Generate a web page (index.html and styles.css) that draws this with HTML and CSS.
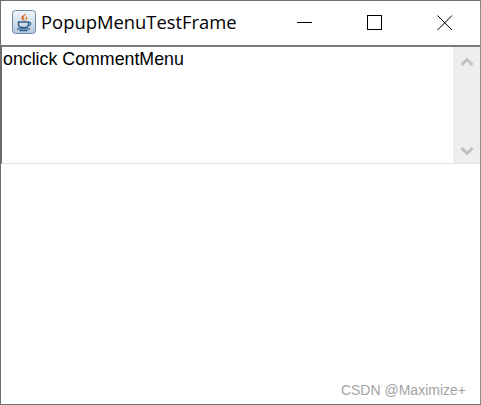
FILE: index.html
```html
<!DOCTYPE html>
<html lang="en">
<head>
<meta charset="utf-8">
<title>PopupMenuTestFrame</title>
<link rel="stylesheet" href="styles.css">
</head>
<body>
<div class="window">
  <header class="titlebar">
    <div class="app-icon">
      <svg width="24" height="24" viewBox="0 0 24 24">
        <defs>
          <linearGradient id="tile" x1="0" y1="0" x2="0" y2="1">
            <stop offset="0" stop-color="#f4f7fb"/>
            <stop offset="1" stop-color="#b4c8de"/>
          </linearGradient>
        </defs>
        <rect x="0.5" y="0.5" width="23" height="23" rx="3" fill="url(#tile)" stroke="#6f8aa6"/>
        <path d="M13.500 3c1.500 2-3.200 3.400-2 5.600.4.800 1.200 1.200 1.500 2.400-2.600-1-4.300-2.500-3.300-4.300.8-1.400 3.800-1.900 3.800-3.700z" fill="#d9560f"/>
        <path d="M15.800 5.500c-1.600 1-2.800 1.700-2.300 3 .2.600.5 1 .4 1.600 1.300-.9 1.700-1.900 1-2.900-.4-.6-.1-1.100.9-1.700z" fill="#e67a22"/>
        <path d="M6.500 12h10v2.500c0 1.800-1.500 3-3.200 3h-3.600c-1.700 0-3.200-1.200-3.200-3z" fill="none" stroke="#2f5f8a" stroke-width="1.400"/>
        <path d="M16.500 12.500h1.500c1.300 0 1.300 2.700-1.800 3.200" fill="none" stroke="#2f5f8a" stroke-width="1.100"/>
        <path d="M5 18.800h13M7.500 20.600h8" stroke="#2f5f8a" stroke-width="1.200"/>
      </svg>
    </div>
    <span class="title">PopupMenuTestFrame</span>
    <div class="controls">
      <span class="control">
        <svg width="16" height="16" viewBox="0 0 16 16"><path d="M0 8.500h15" stroke="#000" fill="none"/></svg>
      </span>
      <span class="control">
        <svg width="16" height="16" viewBox="0 0 16 16"><rect x="0.500" y="1.500" width="14" height="14" stroke="#000" fill="none"/></svg>
      </span>
      <span class="control">
        <svg width="16" height="16" viewBox="0 0 16 16"><path d="M0.500 1.500l14.500 14.500M15 1.500l-14.500 14.500" stroke="#000" fill="none"/></svg>
      </span>
    </div>
  </header>
  <main class="content">
    <section class="textarea">
      <div class="text">onclick CommentMenu</div>
      <div class="scrollbar">
        <svg width="14" height="10" viewBox="0 0 14 10"><path d="M1.500 8L7 2.500 12.500 8" stroke="#c0c0c0" stroke-width="3" fill="none"/></svg>
        <svg width="14" height="10" viewBox="0 0 14 10"><path d="M1.500 2L7 7.500 12.500 2" stroke="#c0c0c0" stroke-width="3" fill="none"/></svg>
      </div>
    </section>
    <footer class="watermark">CSDN @Maximize+</footer>
  </main>
</div>
</body>
</html>
```
FILE: styles.css
```css
* {
  box-sizing: border-box;
}
html, body {
  margin: 0;
  padding: 0;
  background: #fff;
}
.window {
  width: 481px;
  height: 405px;
  border: 1px solid #6e6e6e;
  border-right-color: #8a8a8a;
  display: flex;
  flex-direction: column;
  overflow: hidden;
}
.titlebar {
  height: 46px;
  flex: none;
  display: flex;
  align-items: center;
  padding-left: 11px;
  border-bottom: 2px solid #7a7a7a;
  padding-bottom: 2px;
}
.app-icon {
  width: 24px;
  height: 24px;
  display: flex;
}
.title {
  margin-left: 5px;
  margin-bottom: 2px;
  font-family: "Open Sans", sans-serif;
  font-size: 18.4px;
  color: #000;
  white-space: nowrap;
}
.controls {
  margin-left: auto;
  display: flex;
  padding-right: 0;
}
.control {
  width: 70px;
  display: flex;
  justify-content: center;
}
.content {
  flex: 1;
  display: flex;
  flex-direction: column;
}
.textarea {
  height: 117px;
  display: flex;
  border-left: 1px solid #6e6e6e;
  border-bottom: 1px solid #e4e4e4;
}
.text {
  flex: 1;
  padding-left: 1px;
  font-family: "Liberation Sans", Arial, sans-serif;
  font-size: 17.8px;
  line-height: 24px;
  color: #000;
}
.scrollbar {
  width: 27px;
  background: #eeeeee;
  display: flex;
  flex-direction: column;
  justify-content: space-between;
  align-items: center;
  padding: 10px 0 7px;
}
.watermark {
  margin-top: auto;
  padding: 0 14px 6px 0;
  text-align: right;
  font-family: "Liberation Sans", Arial, sans-serif;
  font-size: 14px;
  line-height: 16px;
  color: #a3a3a3;
}
```
